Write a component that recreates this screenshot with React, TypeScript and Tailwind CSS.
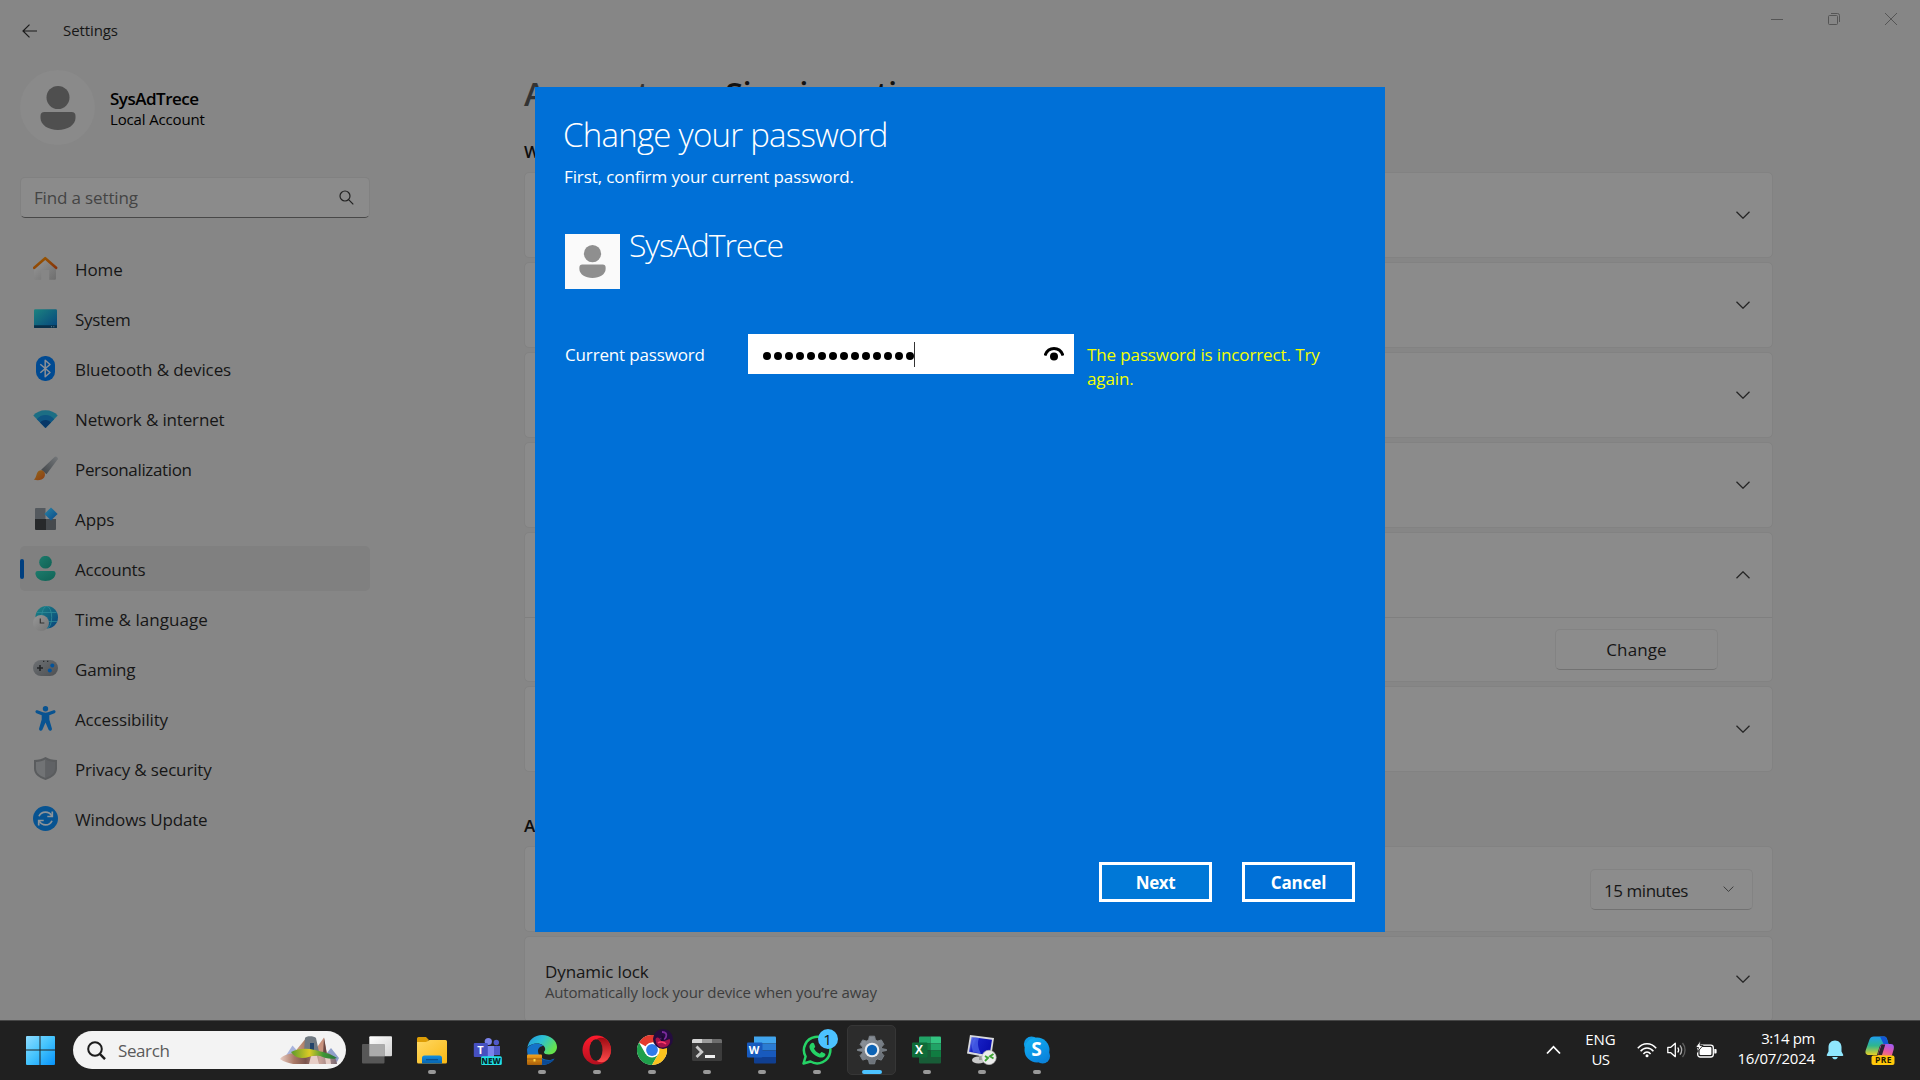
import React from "react";

type IconProps = { className?: string };

/* ---------- small line icons ---------- */

const Chevron = ({ className = "" }: IconProps) => (
  <svg viewBox="0 0 14 8" fill="none" stroke="currentColor" strokeWidth="1.3" className={className}>
    <path d="M0.5 0.8 7 7.2 13.5 0.8" />
  </svg>
);

const BackArrow = () => (
  <svg width="16" height="14" viewBox="0 0 16 14" fill="none" stroke="#1b1b1b" strokeWidth="1.2">
    <path d="M15 7H1M7.5 0.6 1 7l6.5 6.4" />
  </svg>
);

const PersonGlyph = ({ color, className = "" }: { color: string; className?: string }) => (
  <svg viewBox="0 0 36 44" fill={color} className={className}>
    <circle cx="18" cy="11.5" r="11.5" />
    <path d="M4.5 26h27a4 4 0 0 1 4 4v2c0 7-8 12-17.500 12S.5 39 .5 32v-2a4 4 0 0 1 4-4z" />
  </svg>
);

/* ---------- sidebar icons ---------- */

const HomeIcon = () => (
  <svg width="25" height="25" viewBox="0 0 25 25">
    <defs>
      <linearGradient id="hm" x1="0" y1="0" x2="1" y2="1">
        <stop offset="0" stopColor="#999999" />
        <stop offset="1" stopColor="#6e6e6e" />
      </linearGradient>
      <linearGradient id="hr" x1="0" y1="0" x2="1" y2="1">
        <stop offset="0" stopColor="#9a5c00" />
        <stop offset="1" stopColor="#86330a" />
      </linearGradient>
    </defs>
    <path d="M1 10.500 12 2l11 8.500V22.500a1.200 1.200 0 0 1-1.200 1.200H16.200V14H8.200v9.700H2.200A1.200 1.200 0 0 1 1 22.500z" fill="url(#hm)" />
    <path d="M1.300 11.800 12.200 2.200l10.900 9.600" fill="none" stroke="url(#hr)" strokeWidth="2.600" strokeLinecap="round" strokeLinejoin="round" />
  </svg>
);

const SystemIcon = () => (
  <svg width="25" height="25" viewBox="0 0 25 25">
    <defs>
      <linearGradient id="sy" x1="0" y1="0" x2="1" y2="1">
        <stop offset="0" stopColor="#1c8380" />
        <stop offset="1" stopColor="#05437c" />
      </linearGradient>
    </defs>
    <rect x="1" y="3.300" width="23" height="18.800" rx="1.200" fill="url(#sy)" />
    <path d="M1 19.300h23v1.600a1.200 1.200 0 0 1-1.200 1.200H2.200A1.200 1.200 0 0 1 1 20.900z" fill="#08304a" />
    <path d="M18 20.200h1v1h-1zM20.300 20.200h1v1h-1z" fill="#5f8395" />
  </svg>
);

const BluetoothIcon = () => (
  <svg width="25" height="25" viewBox="0 0 25 25">
    <rect x="3" y="0" width="19" height="25" rx="9" fill="#004a92" />
    <path d="M7.300 8.300 17 16.500 12.200 20.800V4.300L17 8.500 7.300 16.800" fill="none" stroke="#8d9096" strokeWidth="1.500" strokeLinejoin="round" />
  </svg>
);

const NetworkIcon = () => (
  <svg width="25" height="25" viewBox="0 0 25 25">
    <path d="M12.500 22 .3 9.600C3 6.200 7.500 4.200 12.500 4.200s9.500 2 12.200 5.400z" fill="#1c6e84" />
    <path d="M12.500 22 3.900 13.200c2-2.500 5-4.100 8.600-4.100s6.600 1.600 8.600 4.100z" fill="#0f5582" />
    <path d="M12.500 22 7.100 16.500c1.200-1.500 3.100-2.500 5.400-2.500s4.200 1 5.400 2.500z" fill="#073767" />
  </svg>
);

const BrushIcon = () => (
  <svg width="25" height="25" viewBox="0 0 25 25">
    <defs>
      <linearGradient id="bh" x1="1" y1="0" x2="0" y2="1">
        <stop offset="0" stopColor="#74777a" />
        <stop offset="1" stopColor="#3f4347" />
      </linearGradient>
      <linearGradient id="bt" x1="0" y1="0" x2="1" y2="1">
        <stop offset="0" stopColor="#93671a" />
        <stop offset="1" stopColor="#8c3d14" />
      </linearGradient>
    </defs>
    <path d="M8.200 13.700 21.300 1.200a2 2 0 0 1 2.900 2.900L13.500 18.300z" fill="url(#bh)" />
    <path d="M4 17.200c1-2.600 3.800-3.600 5.800-2.400 2.300 1.300 2.800 4.200 1.500 6.400-1.800 3-7 3.800-10.500 2.200 2-1 2.200-3.600 3.200-6.200z" fill="url(#bt)" />
  </svg>
);

const AppsIcon = () => (
  <svg width="25" height="25" viewBox="0 0 25 25">
    <defs>
      <linearGradient id="ap" x1="0" y1="0" x2="1" y2="1">
        <stop offset="0" stopColor="#2a86a5" />
        <stop offset="1" stopColor="#07488a" />
      </linearGradient>
    </defs>
    <path d="M3 2h9.500v11H2V3a1 1 0 0 1 1-1z" fill="#54595e" />
    <path d="M2 13h11v11H3a1 1 0 0 1-1-1z" fill="#27292b" />
    <path d="M13 13h10v10a1 1 0 0 1-1 1h-9z" fill="#464a4e" />
    <path d="M18 1.400 24.600 8 18 14.600 11.400 8z" fill="url(#ap)" />
  </svg>
);

const AccountsIcon = () => (
  <svg width="25" height="25" viewBox="0 0 25 25">
    <defs>
      <linearGradient id="ac" x1="0" y1="0" x2="1" y2="1">
        <stop offset="0" stopColor="#1d7b6c" />
        <stop offset="1" stopColor="#0f6255" />
      </linearGradient>
    </defs>
    <circle cx="12.500" cy="6.200" r="6.300" fill="url(#ac)" />
    <path d="M4.700 15h15.600a2.300 2.300 0 0 1 2.300 2.300c0 4.500-4.500 7.700-10.100 7.700S2.400 21.800 2.400 17.300A2.300 2.300 0 0 1 4.700 15z" fill="url(#ac)" />
  </svg>
);

const TimeIcon = () => (
  <svg width="25" height="25" viewBox="0 0 25 25">
    <defs>
      <linearGradient id="tm" x1="0" y1="0" x2="1" y2="1">
        <stop offset="0" stopColor="#1d8583" />
        <stop offset="1" stopColor="#07427d" />
      </linearGradient>
      <linearGradient id="tc" x1="0" y1="0" x2="1" y2="1">
        <stop offset="0" stopColor="#979797" />
        <stop offset="1" stopColor="#747474" />
      </linearGradient>
    </defs>
    <circle cx="13.700" cy="11.300" r="11.300" fill="url(#tm)" />
    <g fill="none" stroke="#2e8a98" strokeWidth="0.800">
      <ellipse cx="13.700" cy="11.300" rx="5" ry="11" />
      <path d="M4 6.500h19.500M3 15.500h21" />
    </g>
    <circle cx="8" cy="17" r="8" fill="url(#tc)" />
    <path d="M7.300 12.500V17h4" fill="none" stroke="#333" strokeWidth="1.200" />
  </svg>
);

const GamingIcon = () => (
  <svg width="25" height="25" viewBox="0 0 25 25">
    <defs>
      <linearGradient id="gm" x1="0" y1="0" x2="1" y2="1">
        <stop offset="0" stopColor="#6d7073" />
        <stop offset="1" stopColor="#4d5053" />
      </linearGradient>
    </defs>
    <rect x="0" y="4" width="25" height="16" rx="8" fill="url(#gm)" />
    <path d="M7 9v6M4 12h6" stroke="#232527" strokeWidth="1.600" />
    <circle cx="19.300" cy="9.500" r="2" fill="#04539a" />
    <circle cx="16.800" cy="14.500" r="2" fill="#04539a" />
    <path d="M10 4.800h1.300v1.300H10zM14 4.800h1.300v1.300H14z" fill="#2b2d2f" />
  </svg>
);

const AccessIcon = () => (
  <svg width="25" height="25" viewBox="0 0 25 25" fill="#085391">
    <circle cx="12.500" cy="2.700" r="2.700" />
    <path d="M4.400 4.300 10 6.300c1.600.5 3.400.5 5 0l5.600-2c2-.6 2.800 2 .9 2.900L16.300 9.300v4.200l2.600 9c.4 2.200-2.300 3-3.300 1.200L12.500 16.500l-3.100 7.200c-1 1.800-3.700 1-3.300-1.200l2.600-9V9.300L3.500 7.200c-1.900-.9-1.100-3.500.9-2.900z" />
  </svg>
);

const ShieldIcon = () => (
  <svg width="25" height="25" viewBox="0 0 25 25">
    <path d="M12.500 1C9.500 3 5.500 4 1 4v8.500C1 18 5.500 21.800 12.500 24 19.500 21.800 24 18 24 12.500V4C19.500 4 15.500 3 12.500 1z" fill="#5a5c5e" />
    <path d="M12.500 3.300C9.800 5 6.500 5.900 3 6v6.500c0 4.400 3.600 7.400 9.500 9.400z" fill="#717375" />
    <path d="M12.500 3.300C15.200 5 18.500 5.900 22 6v6.500c0 4.400-3.600 7.400-9.500 9.400z" fill="#606265" />
  </svg>
);

const UpdateIcon = () => (
  <svg width="25" height="25" viewBox="0 0 25 25">
    <circle cx="12.500" cy="12.500" r="12.500" fill="#075391" />
    <g fill="none" stroke="#8e9499" strokeWidth="1.700">
      <path d="M6 10.300c1.200-3 3.600-4.200 6.500-4.200 2.700 0 4.800 1.200 6.200 3.700" />
      <path d="M19.300 5.500v5h-5" />
      <path d="M19 14.700c-1.200 3-3.600 4.200-6.500 4.200-2.700 0-4.800-1.200-6.200-3.700" />
      <path d="M5.700 19.500v-5h5" />
    </g>
  </svg>
);

/* ---------- taskbar icons ---------- */

const StartIcon = () => (
  <svg width="30" height="30" viewBox="0 0 30 30">
    <defs>
      <linearGradient id="st" gradientUnits="userSpaceOnUse" x1="1" y1="1" x2="29" y2="29">
        <stop offset="0" stopColor="#8fdcff" />
        <stop offset="0.500" stopColor="#45c4fd" />
        <stop offset="1" stopColor="#0b96fb" />
      </linearGradient>
    </defs>
    <path fill="url(#st)" d="M1 2a1 1 0 0 1 1-1h12.500v13.500H1zM15.500 1H29a1 1 0 0 1 1 1v12.500H15.500zM1 15.500h13.500V30H2a1 1 0 0 1-1-1zM15.500 15.500H30V29a1 1 0 0 1-1 1H15.500z" />
  </svg>
);

const SearchArt = () => (
  <svg width="60" height="30" viewBox="0 0 60 30">
    <defs>
      <linearGradient id="rk" x1="0" y1="0" x2="1" y2="0">
        <stop offset="0" stopColor="#e9cdc4" />
        <stop offset="0.250" stopColor="#a97865" />
        <stop offset="0.450" stopColor="#7a534c" />
        <stop offset="0.700" stopColor="#c9a399" />
        <stop offset="1" stopColor="#7b6a72" />
      </linearGradient>
      <linearGradient id="gr" x1="0" y1="0" x2="1" y2="0">
        <stop offset="0" stopColor="#5b9a2a" />
        <stop offset="0.400" stopColor="#dccb25" />
        <stop offset="0.700" stopColor="#3f9636" />
        <stop offset="1" stopColor="#27743b" />
      </linearGradient>
      <linearGradient id="lr" x1="0" y1="0" x2="1" y2="0">
        <stop offset="0" stopColor="#e2ae8b" />
        <stop offset="1" stopColor="#8d6253" />
      </linearGradient>
    </defs>
    <path d="M5 22 12.500 10.500l5 5.500-3 8H5z" fill="#a9b4dd" />
    <path d="M46 19l5-6 8 10-2 4z" fill="#8fa0cb" />
    <path d="M13 19 27 2l5 16z" fill="url(#lr)" />
    <path d="M35 15 44 2.500l3 17H34z" fill="#c9937d" />
    <path d="M44 2.500l3 17h-4z" fill="#6b4a45" />
    <path d="M25 3c1-2.500 9-2.500 11 0l3 14H24z" fill="#707981" />
    <path d="M30 8h4v9h-4z" fill="#23446a" />
    <path d="M0 24c4-5 11-6 20-6h28c5 2 9 6 9 11H13C9 28 4 27 0 24z" fill="url(#rk)" />
    <path d="M31 21h6l2 8H29zM45 22h5l1 7h-5z" fill="#e6cdc6" />
    <path d="M11 17c8-4 16-4 24-2 8 2 14 3 22 8-6 2-12 0-17-2-7-2-11 2-18 2-5 0-9-3-11-6z" fill="url(#gr)" />
  </svg>
);

const TaskViewIcon = () => (
  <svg width="30" height="30" viewBox="0 0 30 30">
    <defs>
      <linearGradient id="tv" x1="0" y1="0" x2="1" y2="1">
        <stop offset="0" stopColor="#ffffff" />
        <stop offset="1" stopColor="#d2d2d2" />
      </linearGradient>
    </defs>
    <rect x="7.300" y="1.300" width="22.700" height="20" rx="1" fill="url(#tv)" />
    <rect x="0" y="9" width="22.500" height="19.500" rx="1" fill="#5d5d5d" opacity="0.900" />
    <rect x="7.300" y="9" width="15.200" height="12.300" fill="#ababab" />
  </svg>
);

const ExplorerIcon = () => (
  <svg width="30" height="30" viewBox="0 0 30 30">
    <defs>
      <linearGradient id="ex" x1="0" y1="0" x2="1" y2="1">
        <stop offset="0" stopColor="#ffd863" />
        <stop offset="1" stopColor="#f9b813" />
      </linearGradient>
      <linearGradient id="ex2" x1="0" y1="0" x2="0" y2="1">
        <stop offset="0" stopColor="#118ee0" />
        <stop offset="1" stopColor="#0763ae" />
      </linearGradient>
    </defs>
    <path d="M0 3.500A1.500 1.500 0 0 1 1.500 2H9l3 3-3 3H0z" fill="#dd9d06" />
    <path d="M0 7h9l3.500-2H28.500A1.500 1.500 0 0 1 30 6.500V27a1.500 1.500 0 0 1-1.500 1.500h-27A1.500 1.500 0 0 1 0 27z" fill="url(#ex)" />
    <path d="M5 28.500V23a2.500 2.500 0 0 1 2.500-2.500h15A2.500 2.500 0 0 1 25 23v5.500z" fill="url(#ex2)" />
    <path d="M9 24.700h12" stroke="#0a4d8c" strokeWidth="1.200" />
  </svg>
);

const TeamsIcon = () => (
  <span className="relative block size-[30px]">
    <svg width="30" height="30" viewBox="0 0 30 30">
      <circle cx="16.300" cy="6.500" r="3.600" fill="#7b83eb" />
      <circle cx="24.300" cy="7.500" r="2.700" fill="#5059c9" />
      <path d="M21 11h7v9h-7z" fill="#5059c9" />
      <path d="M12 11h10v11H12z" fill="#7b83eb" />
      <rect x="1.800" y="8" width="14" height="14" rx="1" fill="#4650c0" />
      <rect x="9" y="21.300" width="20.800" height="8.700" rx="1.500" fill="#22e2e6" />
    </svg>
    <span className="absolute left-[2px] top-[8px] w-[14px] text-center text-[11px] leading-[14px] font-bold text-white">T</span>
    <span className="absolute left-[9px] top-[21px] w-[21px] text-center text-[8px] leading-[9px] font-extrabold text-[#06282c]">NEW</span>
  </span>
);

const EdgeIcon = () => (
  <svg width="30" height="30" viewBox="0 0 30 30">
    <defs>
      <linearGradient id="eg" x1="0" y1="0" x2="1" y2="0.500">
        <stop offset="0" stopColor="#2394e0" />
        <stop offset="0.500" stopColor="#2cc1d3" />
        <stop offset="1" stopColor="#65e34d" />
      </linearGradient>
      <linearGradient id="eb" x1="0" y1="0" x2="0" y2="1">
        <stop offset="0" stopColor="#f4a21b" />
        <stop offset="1" stopColor="#a85f0a" />
      </linearGradient>
    </defs>
    <path d="M.3 13C1.500 5 7.500 0 15 0c8.500 0 15 6 15 12 0 4.500-3.500 7.500-8 7.500-3 0-5-1-5-2.300 0-1 1.200-1.200 1.200-3.200 0-3-3.500-5.500-8-5.500-4.300 0-8.500 1.500-9.900 4.500z" fill="url(#eg)" />
    <path d="M.1 14c1-3 5-5.500 9.500-5.500 3 0 5.400.9 7 2.500-3.500 0-5.600 2.200-5.600 5 0 6 6 9 11 9 2 0 4-.7 5.500-1.500C25 27.500 20.500 30 15 30 6 30-.500 23 .1 14z" fill="#1573c9" />
    <path d="M11.200 18c0 4.500 4.500 7.500 10 7.500 2.500 0 4.800-.8 6.300-1.700-2.500 4-7 6.200-12.500 6.200z" fill="#0c4a94" />
    <rect x="0" y="19.500" width="15" height="10.500" rx="1" fill="url(#eb)" />
    <path d="M0 24h15" stroke="#8f4f05" strokeWidth="0.800" />
    <path d="M6.500 24h2v2.500h-2z" fill="#ffd94a" />
  </svg>
);

const OperaIcon = () => (
  <svg width="30" height="30" viewBox="0 0 30 30">
    <defs>
      <linearGradient id="op" x1="0" y1="0" x2="0" y2="1">
        <stop offset="0" stopColor="#ff1b2d" />
        <stop offset="1" stopColor="#b5101f" />
      </linearGradient>
      <linearGradient id="op2" x1="0" y1="0" x2="0" y2="1">
        <stop offset="0" stopColor="#9c0a12" />
        <stop offset="1" stopColor="#ff4b4b" />
      </linearGradient>
    </defs>
    <ellipse cx="14.800" cy="15" rx="14.300" ry="14.500" fill="url(#op)" />
    <path d="M15 4c2-1.500 5.500-1.500 8-.5 4 2.700 6 7 6 11.500s-2 8.800-6 11.500c-2.500 1-6 1-8-.5z" fill="url(#op2)" />
    <ellipse cx="14" cy="15" rx="6.500" ry="10.800" fill="#202020" />
  </svg>
);

const ChromeIcon = () => (
  <span className="relative block size-[30px]">
    <svg width="30" height="30" viewBox="0 0 30 30">
      <circle cx="15" cy="15" r="15" fill="#fff" />
      <path d="M15 15 2 7.500A15 15 0 0 1 28 7.500H15z" fill="#e33b2e" />
      <path d="M2 7.500A15 15 0 0 0 15 30l6.500-11.200L15 15 8.500 18.800z" fill="#1fa04b" />
      <path d="M28 7.500A15 15 0 0 1 15 30l6.500-11.200L21.500 11.200 15 7.500z" fill="#fcc31e" />
      <circle cx="15" cy="15" r="7.500" fill="#fff" />
      <circle cx="15" cy="15" r="5.900" fill="#2f7bea" />
    </svg>
    <svg width="20" height="20" viewBox="0 0 20 20" className="absolute left-[16px] top-[-6px]">
      <circle cx="10" cy="10" r="10" fill="#240c3f" />
      <path d="M2.500 10c2-3 4-1 5 1s5 1 9-1c2 3-1 8-6 8.500S3 16 2.500 10z" fill="#a3114a" />
      <path d="M9 3c4 0 5 2 4 5s-4 3-5 1" fill="none" stroke="#7a2b9c" strokeWidth="1.800" />
      <path d="M5 14c2-2 6-1 8 1" fill="none" stroke="#ff3d6b" strokeWidth="1.500" />
      <path d="M8.500 7c2 0 3 2 2 5H8z" fill="#1b0930" />
    </svg>
  </span>
);

const TerminalIcon = () => (
  <svg width="30" height="30" viewBox="0 0 30 30">
    <rect x="0" y="4" width="30" height="22" rx="1.500" fill="#3c3c3c" />
    <path d="M0 8V5.500A1.500 1.500 0 0 1 1.500 4H10v4z" fill="#d6d6d6" />
    <path d="M10 4h10v4H10z" fill="#9b9b9b" />
    <path d="M20 4h8.500A1.500 1.500 0 0 1 30 5.500V8H20z" fill="#6d6d6d" />
    <path d="M4.500 11.500 9.800 17l-5.300 5" fill="none" stroke="#c9c9c9" strokeWidth="2.800" />
    <path d="M13 20h10v3H13z" fill="#efefef" />
  </svg>
);

const WordIcon = () => (
  <span className="relative block size-[30px]">
    <svg width="30" height="30" viewBox="0 0 30 30">
      <path d="M7 1.500h21A1 1 0 0 1 29 2.500V8.500H7z" fill="#41a5ee" />
      <path d="M7 8.500h22v7H7z" fill="#2b7cd3" />
      <path d="M7 15.500h22v6.500H7z" fill="#185abd" />
      <path d="M7 22h22v5.500a1 1 0 0 1-1 1H8a1 1 0 0 1-1-1z" fill="#103f91" />
      <rect x="0" y="7.500" width="15.500" height="15" rx="1" fill="#185abd" />
    </svg>
    <span className="absolute left-0 top-[7px] w-[15px] text-center text-[11px] leading-[15px] font-bold text-white">W</span>
  </span>
);

const WhatsAppIcon = () => (
  <span className="relative block size-[30px]">
    <svg width="30" height="30" viewBox="0 0 30 30">
      <path d="M1.500 28.500 3.600 21.500A13.200 13.200 0 1 1 8.500 26.500z" fill="#202020" stroke="#25d366" strokeWidth="2.500" strokeLinejoin="round" />
      <path d="M9.300 8.300c1-1 2.200-.8 2.700.3l1.200 2.800c.2.600-.8 1.600-1.300 2.200 1.500 2.700 3.200 4 5.900 5.200.7-.8 1.400-2 2-1.800l3 1.400c1 .5.700 1.700 0 2.600-1.400 1.700-3.700 2.100-6.500 1-4-1.500-7.500-5-8.700-9-.5-1.900.3-3.500 1.700-4.700z" fill="#25d366" />
    </svg>
    <span className="absolute left-[16px] top-[-6px] size-[20px] rounded-full bg-[#4cc2ff] text-center text-[15px] leading-[20px] text-[#111]">1</span>
  </span>
);

const GearIcon = () => (
  <svg width="30" height="30" viewBox="0 0 30 30">
    <defs>
      <linearGradient id="ge" x1="0" y1="0" x2="1" y2="1">
        <stop offset="0" stopColor="#949ba3" />
        <stop offset="1" stopColor="#5f656c" />
      </linearGradient>
    </defs>
    <g fill="url(#ge)" stroke="#7b8289" strokeWidth="1" strokeLinejoin="round">
      <path d="M11.600 4.800 12.400 1.200h5.200l.8 3.600 2.300 1.300 3.600-1.200 2.600 4.500-2.400 2.700v1.500l5 .9v1l-5 .9v1.500l2.400 2.700-2.600 4.500-3.600-1.200-2.300 1.300-.8 3.600h-5.200l-.8-3.600-2.300-1.300-3.600 1.200-2.600-4.500 2.400-2.700v-1.500l-5-.9v-1l5-.9v-1.500L3.100 9.400l2.600-4.500 3.600 1.200z" />
    </g>
    <circle cx="15" cy="15" r="7.300" fill="#e9ecef" />
    <circle cx="15" cy="15" r="5.200" fill="#0c63b5" />
  </svg>
);

const ExcelIcon = () => (
  <span className="relative block size-[30px]">
    <svg width="30" height="30" viewBox="0 0 30 30">
      <path d="M8 1.500h10.500V8.500H7V2.500a1 1 0 0 1 1-1z" fill="#21a366" />
      <path d="M18.500 1.500H28a1 1 0 0 1 1 1v6H18.500z" fill="#33c481" />
      <path d="M7 8.500h11.500v7H7z" fill="#107c41" />
      <path d="M18.500 8.500H29v7H18.500z" fill="#21a366" />
      <path d="M7 15.500h11.500v6.500H7z" fill="#185c37" />
      <path d="M18.500 15.500H29v6.500H18.500z" fill="#107c41" />
      <path d="M7 22h22v5.500a1 1 0 0 1-1 1H8a1 1 0 0 1-1-1z" fill="#185c37" />
      <rect x="0" y="7.500" width="15.500" height="15" rx="1" fill="#0f6c39" />
    </svg>
    <span className="absolute left-0 top-[7px] w-[15px] text-center text-[12px] leading-[15px] font-bold text-white">X</span>
  </span>
);

const RemoteIcon = () => (
  <svg width="30" height="30" viewBox="0 0 30 30">
    <defs>
      <linearGradient id="rd" x1="0" y1="0" x2="1" y2="0.400">
        <stop offset="0" stopColor="#8fa6ff" />
        <stop offset="0.350" stopColor="#1720c4" />
        <stop offset="1" stopColor="#0a0fb0" />
      </linearGradient>
    </defs>
    <ellipse cx="11.500" cy="25" rx="6.500" ry="3.600" fill="#c9c9c9" />
    <path d="M12 18h6l1 7h-7z" fill="#9c9c9c" />
    <path d="M3 0 27 3 24 23 0 18.500z" fill="#d9dade" />
    <path d="M4.500 2 25 4.700 22.500 20.500 2 16.800z" fill="url(#rd)" />
    <path d="M12 3c-2 5-1 10 2 15.500l-8-1.500C4 12 5 6 8 2.500z" fill="#5a78f4" opacity="0.600" />
    <circle cx="22" cy="22.500" r="7.200" fill="#ececec" stroke="#b4b4b4" strokeWidth="0.700" />
    <path d="M18 21l3 2-3 3M26.500 19l-3.500 2.300 3.500 2.200" fill="none" stroke="#3fa535" strokeWidth="1.900" />
  </svg>
);

const SkypeIcon = () => (
  <span className="relative block size-[30px]">
    <svg width="30" height="30" viewBox="0 0 30 30">
      <defs>
        <linearGradient id="sk" x1="0" y1="0" x2="0.600" y2="1">
          <stop offset="0" stopColor="#12b3f4" />
          <stop offset="1" stopColor="#0a84dd" />
        </linearGradient>
      </defs>
      <circle cx="9.500" cy="9" r="7.600" fill="#0f9be6" />
      <circle cx="20.700" cy="21" r="7.400" fill="#0b83d9" />
      <circle cx="15" cy="15" r="12.500" fill="url(#sk)" />
    </svg>
    <span className="absolute inset-0 text-center text-[19px] leading-[29px] font-bold text-white">S</span>
  </span>
);

const CopilotIcon = () => (
  <span className="relative block h-[30px] w-[30px]">
    <svg width="30" height="30" viewBox="0 0 30 30">
      <defs>
        <linearGradient id="c1" x1="0" y1="0" x2="0" y2="1">
          <stop offset="0" stopColor="#1f9ff0" />
          <stop offset="0.500" stopColor="#2fb68d" />
          <stop offset="1" stopColor="#e8cf25" />
        </linearGradient>
        <linearGradient id="c2" x1="0.700" y1="0" x2="0.300" y2="1">
          <stop offset="0" stopColor="#a45bf0" />
          <stop offset="0.500" stopColor="#e8589f" />
          <stop offset="1" stopColor="#f7914e" />
        </linearGradient>
      </defs>
      <path d="M9 1.500h10c2 0 2.800 1.500 3.500 4L23.500 9h-5c-2.500 0-3.500 1.300-4.200 3.500L12 20H4C.5 20 0 17.500.8 15L4.500 4.500C5.300 2.500 6.500 1.500 9 1.500z" fill="url(#c1)" />
      <path d="M15 1.500h4c2 0 2.800 1.500 3.500 4L23.500 9h-5z" fill="#1357d6" />
      <path d="M18.500 9H26c3 0 3.300 3 2.500 6l-1.500 5c-.7 2-2 3-4 3H12l3-11c.7-2 1.500-3 3.500-3z" fill="url(#c2)" />
      <path d="M16.500 9.500h3.800L17 20h-4z" fill="#2b2230" />
      <rect x="6.500" y="20.500" width="23" height="9.500" rx="2" fill="#ffc80a" />
    </svg>
    <span className="absolute left-[7px] top-[20px] w-[23px] text-center text-[8.500px] leading-[10px] font-bold tracking-[0.500px] text-[#231a00]">PRE</span>
  </span>
);

/* ---------- data ---------- */

const navItems = [
  { label: "Home", icon: HomeIcon, track: "tracking-[-0.1px]" },
  { label: "System", icon: SystemIcon, track: "tracking-[-0.3px]" },
  { label: "Bluetooth & devices", icon: BluetoothIcon, track: "tracking-[-0.1px]" },
  { label: "Network & internet", icon: NetworkIcon, track: "tracking-[-0.15px]" },
  { label: "Personalization", icon: BrushIcon, track: "tracking-[-0.35px]" },
  { label: "Apps", icon: AppsIcon, track: "tracking-[-0.1px]" },
  { label: "Accounts", icon: AccountsIcon, track: "tracking-[-0.25px]", active: true },
  { label: "Time & language", icon: TimeIcon, track: "tracking-[0.05px]" },
  { label: "Gaming", icon: GamingIcon, track: "tracking-[-0.2px]" },
  { label: "Accessibility", icon: AccessIcon, track: "tracking-[-0.15px]" },
  { label: "Privacy & security", icon: ShieldIcon, track: "tracking-[-0.15px]" },
  { label: "Windows Update", icon: UpdateIcon, track: "tracking-[-0.18px]" },
];

const taskApps = [
  { icon: TaskViewIcon },
  { icon: ExplorerIcon, running: true },
  { icon: TeamsIcon },
  { icon: EdgeIcon, running: true },
  { icon: OperaIcon, running: true },
  { icon: ChromeIcon, running: true },
  { icon: TerminalIcon, running: true },
  { icon: WordIcon, running: true },
  { icon: WhatsAppIcon, running: true },
  { icon: GearIcon, focused: true },
  { icon: ExcelIcon, running: true },
  { icon: RemoteIcon, running: true },
  { icon: SkypeIcon, running: true },
];

/* ---------- sections ---------- */

function TitleBar() {
  return (
    <header className="flex h-[60px] justify-between">
      <div className="flex h-[61px] items-center pl-[22px]">
        <BackArrow />
        <span className="mb-[2px] ml-[25px] text-[15px] leading-5 tracking-[-0.1px] text-[#161616]">Settings</span>
      </div>
      <div className="flex h-[38px] items-center gap-[45px] pr-[23px] text-[#555]">
        <svg width="12" height="12" viewBox="0 0 12 12" stroke="currentColor"><path d="M0 6.500h12" /></svg>
        <svg width="12" height="12" viewBox="0 0 12 12" fill="none" stroke="currentColor">
          <rect x="0.500" y="2.500" width="9" height="9" rx="1" />
          <path d="M3 .5h6.500a2 2 0 0 1 2 2V9" />
        </svg>
        <svg width="12" height="12" viewBox="0 0 12 12" stroke="currentColor"><path d="M0 0 12 12M12 0 0 12" /></svg>
      </div>
    </header>
  );
}

function Sidebar() {
  return (
    <aside className="w-[524px] shrink-0 pl-[20px]">
      <div className="flex items-center pt-[10px]">
        <div className="flex size-[75px] items-center justify-center rounded-full bg-[#8a8a8a]">
          <PersonGlyph color="#4f4f4f" className="h-[44px] w-[36px]" />
        </div>
        <div className="ml-[15px] pt-[2px] text-black">
          <div className="text-[17px] leading-[22px] font-semibold tracking-[-0.500px]">SysAdTrece</div>
          <div className="text-[15px] leading-[19px] tracking-[-0.15px]">Local Account</div>
        </div>
      </div>
      <div className="mt-[32px] flex h-[41px] w-[350px] items-center justify-between rounded-[5px] border border-[#818181] border-b-[#484848] bg-[#8b8b8b] pr-[15px] pl-[13px]">
        <span className="pt-px text-[17px] tracking-[-0.15px] text-[#444]">Find a setting</span>
        <svg width="15" height="15" viewBox="0 0 15 15" fill="none" stroke="#222" strokeWidth="1.200">
          <circle cx="6" cy="6" r="5" />
          <path d="m9.600 9.600 4.700 4.700" />
        </svg>
      </div>
      <nav className="mt-[28px] flex w-[350px] flex-col gap-[5px]">
        {navItems.map(({ label, icon: Icon, track, active }) => (
          <div
            key={label}
            className={`relative flex h-[45px] items-center rounded-[5px] pl-[13px] ${active ? "bg-[#808080]" : ""}`}
          >
            {active && <span className="absolute left-0 top-[13px] h-[20px] w-[4px] rounded-full bg-[#003f7f]" />}
            <span className="-mt-px"><Icon /></span>
            <span className={`ml-[17px] pt-[2px] text-[17px] leading-6 text-[#161616] ${track}`}>{label}</span>
          </div>
        ))}
      </nav>
    </aside>
  );
}

const Card = ({ children, className = "pr-[22px]" }: { children?: React.ReactNode; className?: string }) => (
  <div className={`flex h-[86px] shrink-0 items-center justify-between rounded-[5px] border border-[#828282] bg-[#8b8b8b] pl-[20px] ${className}`}>
    {children}
  </div>
);

const RowChevron = ({ up }: { up?: boolean }) => (
  <Chevron className={`ml-auto h-[8px] w-[14px] text-[#262626] ${up ? "rotate-180" : ""}`} />
);

function MainPane() {
  return (
    <main className="w-[1249px] shrink-0 pt-[10px]">
      <h1 className="flex h-[48px] text-[33px] leading-[48px] font-semibold tracking-[-0.6px] whitespace-pre">
        <span className="w-[201px] text-[#333]">Accounts  ›</span>
        <span className="text-[#111]">Sign-in options</span>
      </h1>
      <h2 className="mt-[22px] text-[17px] leading-6 font-semibold text-[#0d0d0d]">Ways to sign in</h2>
      <div className="mt-[8px] flex flex-col gap-1">
        <Card><RowChevron /></Card>
        <Card><RowChevron /></Card>
        <Card><RowChevron /></Card>
        <Card><RowChevron /></Card>
        <div className="h-[150px] rounded-[5px] border border-[#828282] bg-[#8b8b8b]">
          <div className="flex h-[85px] items-center border-b border-[#7f7f7f] pr-[22px]"><RowChevron up /></div>
          <div className="flex h-[63px] items-center justify-end pr-[54px]">
            <button className="h-[41px] w-[163px] rounded-[5px] border border-[#838383] border-b-[#727272] bg-[#8c8c8c] pt-[1px] text-[17px] tracking-[0.1px] text-[#161616]">
              Change
            </button>
          </div>
        </div>
        <Card><RowChevron /></Card>
      </div>
      <h2 className="mt-[42px] text-[17px] leading-6 font-semibold text-[#0d0d0d]">Additional settings</h2>
      <div className="mt-[8px] flex flex-col gap-1">
        <Card className="pr-[19px]">
          <div className="ml-auto flex h-[41px] w-[163px] items-center justify-between rounded-[5px] border border-[#838383] border-b-[#727272] bg-[#8c8c8c] pr-[18px] pl-[13px]">
            <span className="pt-[3px] text-[17px] tracking-[-0.45px] text-[#161616]">15 minutes</span>
            <Chevron className="h-[6px] w-[11px] text-[#3c3c3c]" />
          </div>
        </Card>
        <Card>
          <div className="pt-[3px]">
            <div className="text-[17px] leading-6 tracking-[-0.1px] text-[#161616]">Dynamic lock</div>
            <div className="text-[15px] leading-[17px] tracking-[-0.17px] text-[#3d3d3d]">Automatically lock your device when you’re away</div>
          </div>
          <RowChevron />
        </Card>
      </div>
    </main>
  );
}

function PasswordDialog() {
  return (
    <section className="absolute left-[535px] top-[87px] flex h-[845px] w-[850px] flex-col bg-[#0070d7] px-[30px] pt-[28px] pb-[30px] text-white">
      <h2 className="-ml-[2px] text-[33px] leading-10 font-[350] tracking-[-0.75px]">Change your password</h2>
      <p className="mt-[10px] -ml-px text-[17px] leading-6 tracking-[-0.1px]">First, confirm your current password.</p>
      <div className="mt-[45px] flex h-[55px] items-start">
        <div className="flex size-[55px] items-center justify-center bg-[#fafafa]">
          <PersonGlyph color="#8f8f8f" className="h-[33px] w-[27px]" />
        </div>
        <div className="-mt-[9px] ml-[9px] text-[32px] leading-10 font-light tracking-[-1.1px]">SysAdTrece</div>
      </div>
      <div className="mt-[45px] flex items-start">
        <label className="w-[183px] pt-[9px] text-[17px] leading-6 tracking-[-0.15px]">Current password</label>
        <div className="flex h-[40px] w-[326px] items-center bg-white pr-[10px] pl-[15px]">
          <div className="flex items-center gap-[3px] pt-[3px]">
            {Array.from({ length: 14 }, (_, i) => (
              <span key={i} className="size-[8px] rounded-full bg-black" />
            ))}
          </div>
          <span className="h-[25px] w-px bg-[#333]" />
          <svg width="20" height="14" viewBox="0 0 20 14" className="ml-auto">
            <path d="M1 8.500C2.500 4 6 1.500 10 1.500S17.500 4 19 8.500" fill="none" stroke="#000" strokeWidth="2.900" />
            <circle cx="10" cy="9.500" r="4" fill="#000" />
          </svg>
        </div>
        <p className="ml-[13px] w-[250px] pt-[9px] text-[17px] leading-6 tracking-[-0.12px] text-[#f4ff00]">
          The password is incorrect. Try again.
        </p>
      </div>
      <div className="mt-auto flex justify-end gap-[30px]">
        <button className="h-[40px] w-[113px] border-3 border-white bg-[#0078d7] pt-[2px] text-[17px] leading-6 font-bold tracking-[-0.4px]">Next</button>
        <button className="h-[40px] w-[113px] border-3 border-white pt-[2px] text-[17px] leading-6 font-bold tracking-[-0.1px]">Cancel</button>
      </div>
    </section>
  );
}

function Taskbar() {
  return (
    <footer className="flex h-[60px] items-center border-t border-[#464646] bg-[#202020] pb-px text-white">
      <div className="ml-[25px]"><StartIcon /></div>
      <div className="ml-[18px] flex h-[38px] w-[273px] items-center rounded-full bg-[#f3f3f3] pl-[14px] pr-[6px]">
        <svg width="19" height="19" viewBox="0 0 19 19" fill="none" stroke="#1c1c1c" strokeWidth="2">
          <circle cx="8" cy="8" r="6.800" />
          <path d="m12.800 12.800 5.200 5.400" strokeWidth="2.400" />
        </svg>
        <span className="ml-[12px] pt-px text-[17px] leading-6 tracking-[-0.4px] text-[#5a5a5a]">Search</span>
        <span className="ml-auto"><SearchArt /></span>
      </div>
      <div className="ml-[3px] flex">
        {taskApps.map(({ icon: Icon, running, focused }, i) => (
          <div key={i} className="relative flex h-[58px] w-[55px] items-center justify-center">
            {focused && <span className="absolute inset-x-[3px] top-[4px] h-[50px] rounded-[5px] border border-[#363636] bg-[#2c2c2c]" />}
            <span className="relative"><Icon /></span>
            {running && <span className="absolute bottom-[5px] left-[24px] h-[4px] w-[8px] rounded-full bg-[#989898]" />}
            {focused && <span className="absolute bottom-[5px] left-[18px] h-[4px] w-[20px] rounded-full bg-[#4cc2ff]" />}
          </div>
        ))}
      </div>
      <div className="ml-auto flex items-center pr-[25px]">
        <svg width="15" height="10" viewBox="0 0 15 10" fill="none" stroke="#fff" strokeWidth="1.800"><path d="m1 8.500 6.500-6.800L14 8.500" /></svg>
        <div className="ml-[24px] w-[31px] pb-[3px] text-center text-[15px] leading-5"><div>ENG</div><div className="tracking-[-0.500px]">US</div></div>
        <svg width="20" height="16" viewBox="0 0 20 16" fill="none" stroke="#fff" strokeWidth="1.500" className="ml-[21px]">
          <path d="M.8 6.300C3.300 3.300 6.500 1.800 10 1.800s6.700 1.500 9.200 4.500M3.600 9.200C5.300 7 7.500 5.900 10 5.900s4.700 1.100 6.400 3.300M6.400 12c.9-1.200 2.200-1.900 3.600-1.900s2.700.7 3.600 1.900" />
          <circle cx="10" cy="13.700" r="1.500" fill="#fff" stroke="none" />
        </svg>
        <svg width="20" height="18" viewBox="0 0 20 18" fill="none" stroke="#fff" strokeWidth="1.300" className="ml-[10px]">
          <path d="M.8 6.300h3L8.300 2.300v13.400L3.800 11.700h-3z" strokeLinejoin="round" />
          <path d="M10.800 6.500c1 1.500 1 3.500 0 5" />
          <path d="M13 4.300c2 2.800 2 6.600 0 9.400" stroke="#b0b0b0" />
          <path d="M15.500 2c3.400 4 3.400 10 0 14" stroke="#606060" />
        </svg>
        <svg width="21" height="18" viewBox="0 0 21 18" className="ml-[9px] overflow-visible">
          <rect x="1.700" y="4.200" width="15.600" height="11.800" rx="2.500" fill="none" stroke="#fff" strokeWidth="1.300" />
          <rect x="3.600" y="6.100" width="11.800" height="8" rx="1" fill="#fff" />
          <path d="M18.300 8h1.300a1 1 0 0 1 1 1v2.500a1 1 0 0 1-1 1h-1.300z" fill="#fff" />
          <path d="M4.500-.5-.5 6.500h3L1 11.500 7 4.500H4z" fill="#fff" stroke="#202020" strokeWidth="0.900" />
        </svg>
        <div className="ml-[18px] w-[80px] pb-[4px] text-right text-[15px] leading-5">
          <div className="tracking-[-0.400px]">3:14 pm</div>
          <div className="tracking-[-0.200px]">16/07/2024</div>
        </div>
        <svg width="18" height="20" viewBox="0 0 18 20" fill="#8fe6fd" className="ml-[11px]">
          <path d="M9 .5c3.800 0 6.500 2.900 6.500 6.500v4.500l1.700 3.300c.3.700 0 1.200-.8 1.200H1.600c-.8 0-1.100-.5-.8-1.200l1.700-3.300V7C2.500 3.400 5.200.5 9 .5zM6.200 17h5.600c-.4 1.500-1.400 2.300-2.800 2.300S6.600 18.500 6.200 17z" />
        </svg>
        <div className="ml-[21px]"><CopilotIcon /></div>
      </div>
    </footer>
  );
}

export default function App() {
  return (
    <div className="relative h-[1080px] w-[1920px] overflow-hidden bg-[#868686] font-['Open_Sans',sans-serif]">
      <div className="h-[1020px] overflow-hidden">
        <TitleBar />
        <div className="flex">
          <Sidebar />
          <MainPane />
        </div>
      </div>
      <Taskbar />
      <PasswordDialog />
    </div>
  );
}
